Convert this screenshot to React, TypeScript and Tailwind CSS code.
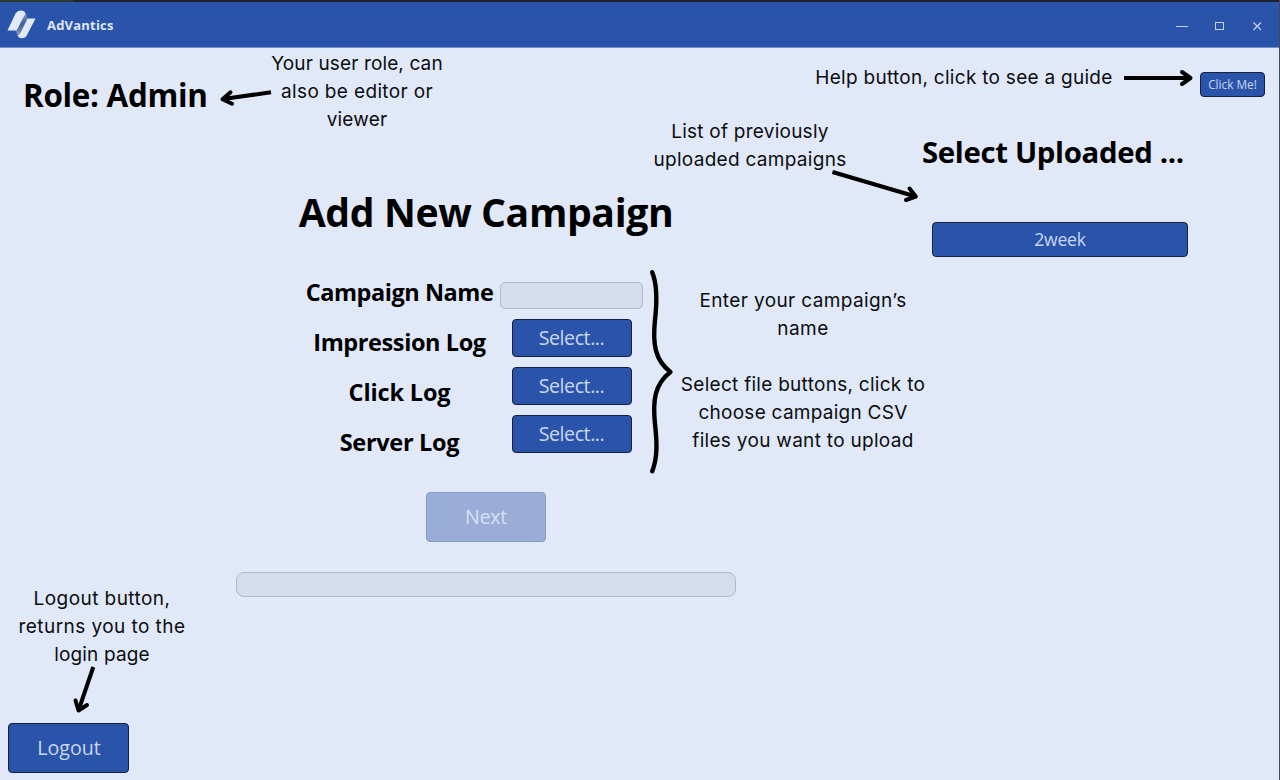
import type { ReactNode } from "react";

function ActionButton({ className, children }: { className: string; children: ReactNode }) {
  return (
    <button
      className={`flex shrink-0 items-center justify-center border border-[#15213d] bg-[#2a54a9] text-[#cbd6ee] whitespace-nowrap ${className}`}
    >
      {children}
    </button>
  );
}

function TitleBar() {
  return (
    <header className="flex h-12 shrink-0 flex-col border-b border-b-[#6f8fce] bg-[#2a54a9]">
      <div className="flex h-[2px] shrink-0 bg-[#1f2329]">
        <div className="w-[73px] bg-[#263a2c]" />
      </div>
      <div className="flex flex-1 items-center justify-between pl-[7px] pr-[16px]">
        <div className="flex items-center gap-[11px]">
          <svg width="29" height="29" viewBox="0 0 29 29">
            <defs>
              <linearGradient id="fold" x1="0" y1="0" x2="0" y2="1">
                <stop offset="0" stopColor="#8e9cb9" />
                <stop offset="0.5" stopColor="#3f5f9f" />
                <stop offset="1" stopColor="#8e9cb9" />
              </linearGradient>
            </defs>
            <path d="M17.5 2 Q20.5 5 20.5 8.5 L13 26 Q9 24 8.5 20.5 Z" fill="url(#fold)" />
            <path d="M0.5 20.5 L8.5 3.5 Q10.5 0.5 14 0.5 Q17.5 0.5 18.5 3.5 L9.5 20.5 Z" fill="#e2e9f8" />
            <path d="M20.5 8.5 H28.5 L20 25 Q18.5 28.3 14.5 28.3 Q11.3 28 10.5 25.5 Q13 25 14 22 Z" fill="#e2e9f8" />
          </svg>
          <span className="text-[13px] font-bold leading-5 tracking-[0.2px] text-[#dfe7f7]">AdVantics</span>
        </div>
        <svg width="88" height="12" viewBox="0 0 88 12" fill="none" stroke="#c7d3ed">
          <path d="M1 7.5 H13" />
          <rect x="40.5" y="3.5" width="8" height="7" />
          <path d="M78.5 3.5 L86 11 M86 3.5 L78.5 11" strokeWidth="1.2" />
        </svg>
      </div>
    </header>
  );
}

function UploadForm() {
  return (
    <main className="flex w-[500px] shrink-0 flex-col">
      <h1 className="mt-[138px] h-[52px] self-center text-center text-[39.2px] font-bold leading-[52px] tracking-[-0.4px] whitespace-nowrap">
        Add New Campaign
      </h1>
      <div className="mt-[29px] ml-[69px] flex h-[200px] gap-[6px]">
        <div className="flex w-[189px] flex-col text-center text-[23.5px] font-bold leading-[50px] whitespace-nowrap">
          <span className="tracking-[-0.45px]">Campaign Name</span>
          <span className="tracking-[-0.4px]">Impression Log</span>
          <span className="tracking-[-0.15px]">Click Log</span>
          <span className="tracking-[-0.3px]">Server Log</span>
        </div>
        <div className="flex w-[143px] flex-col items-center gap-[10px] pt-[15px]">
          <input className="h-[27px] w-full shrink-0 rounded-[5px] border border-[#b1b8cb] bg-[#d5dcec]" />
          <ActionButton className="h-[38px] w-[120px] rounded-[4px] text-[19.6px] tracking-[-0.45px]">Select...</ActionButton>
          <ActionButton className="h-[38px] w-[120px] rounded-[4px] text-[19.6px] tracking-[-0.45px]">Select...</ActionButton>
          <ActionButton className="h-[38px] w-[120px] rounded-[4px] text-[19.6px] tracking-[-0.45px]">Select...</ActionButton>
        </div>
      </div>
      <button
        disabled
        className="mt-[25px] flex h-[50px] w-[120px] items-center justify-center self-center rounded-[4px] border border-[#8d9bbb] bg-[#9aadd9] text-[19.6px] tracking-[-0.3px] text-[#d7e0f3]"
      >
        Next
      </button>
      <div className="mt-[30px] h-[25px] w-[500px] rounded-[8px] border border-[#b1b8cb] bg-[#d5dcec]" />
    </main>
  );
}

function Note({ className, lines }: { className: string; lines: [string, string][] }) {
  return (
    <p className={`absolute flex flex-col items-center font-[Inter,sans-serif] text-[19px] leading-7 whitespace-nowrap text-[#0b0d10] ${className}`}>
      {lines.map(([text, tracking]) => (
        <span key={text} className={tracking}>
          {text}
        </span>
      ))}
    </p>
  );
}

function Annotations() {
  return (
    <div className="pointer-events-none absolute inset-0">
      <Note
        className="left-[257px] top-[50px] w-[200px]"
        lines={[
          ["Your user role, can", "tracking-[0.13px]"],
          ["also be editor or", "tracking-[0.35px]"],
          ["viewer", "tracking-[0.17px]"],
        ]}
      />
      <Note className="left-[804px] top-[64px] w-[320px]" lines={[["Help button, click to see a guide", "tracking-[0.28px]"]]} />
      <Note
        className="left-[640px] top-[118px] w-[220px]"
        lines={[
          ["List of previously", "tracking-[0.24px]"],
          ["uploaded campaigns", "tracking-[0.29px]"],
        ]}
      />
      <Note
        className="left-[682px] top-[287px] w-[242px]"
        lines={[
          ["Enter your campaign’s", "tracking-[0.38px]"],
          ["name", "tracking-[0.5px]"],
        ]}
      />
      <Note
        className="left-[672px] top-[371px] w-[262px]"
        lines={[
          ["Select file buttons, click to", "tracking-[0.28px]"],
          ["choose campaign CSV", "tracking-[0.26px]"],
          ["files you want to upload", "tracking-[0.3px]"],
        ]}
      />
      <Note
        className="left-[2px] top-[585px] w-[200px]"
        lines={[
          ["Logout button,", "tracking-[0.44px]"],
          ["returns you to the", "tracking-[0.44px]"],
          ["login page", "tracking-[0.15px]"],
        ]}
      />
      <svg className="absolute inset-0" width="1280" height="780" viewBox="0 0 1280 780" fill="none" stroke="#000" strokeWidth="4">
        <path d="M271 92.3 L223 99" />
        <path d="M1124 78 H1189" />
        <path d="M832.5 172 L914 196" />
        <path d="M93.3 667 L79 709" />
        <g strokeLinecap="round" strokeLinejoin="round">
          <path d="M230.5 92.3 L222.5 99.2 L232 103.7" />
          <path d="M1182 72 L1190.5 78 L1182 84" />
          <path d="M909.5 188.5 L915.8 196.6 L906 200" />
          <path d="M75.5 700.5 L78.5 710.5 L87 705" />
          <path
            strokeWidth="4.4"
            d="M652.2 272.3 C658 286 656.8 304 655 320 C652.6 343 654.5 360 670.5 371.9 C654.5 383.8 652.6 401 655 424 C656.8 440 658 457 652.2 471.3"
          />
        </g>
      </svg>
    </div>
  );
}

export default function App() {
  return (
    <div className="relative flex h-[780px] w-[1280px] flex-col overflow-hidden border-r border-[#414856] bg-[#e1e8f8] font-['Open_Sans','Noto_Sans',sans-serif] text-black">
      <TitleBar />
      <div className="flex min-h-0 flex-1">
        <aside className="flex w-[236px] shrink-0 flex-col items-start justify-between pb-[7px]">
          <h2 className="mt-[26px] ml-[23px] text-[31.4px] font-bold leading-[42px] tracking-[-0.3px] whitespace-nowrap">Role: Admin</h2>
          <ActionButton className="ml-[8px] h-[50px] w-[121px] rounded-[4px] pl-px text-[19.6px]">Logout</ActionButton>
        </aside>
        <UploadForm />
        <aside className="flex flex-1 flex-col pl-[185px]">
          <ActionButton className="mt-[24px] mr-[14px] h-[25px] w-[65px] self-end rounded-[4px] text-[11.8px]">Click Me!</ActionButton>
          <h2 className="mt-[35px] ml-px text-[29.4px] font-bold leading-10 tracking-[-0.35px] whitespace-nowrap">Select Uploaded ...</h2>
          <ActionButton className="mt-[50px] ml-[11px] h-[35px] w-[256px] rounded-[4px] text-[17.6px] tracking-[-0.2px]">2week</ActionButton>
        </aside>
      </div>
      <Annotations />
    </div>
  );
}
